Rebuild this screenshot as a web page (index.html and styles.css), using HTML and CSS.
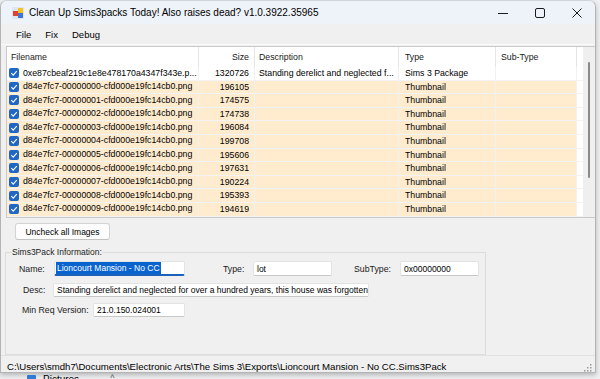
FILE: index.html
```html
<!DOCTYPE html>
<html lang="en">
<head>
    <meta charset="UTF-8">
    <title>Clean Up Sims3packs Today!</title>
    <link rel="stylesheet" href="styles.css">
</head>
<body>
    <div class="window">
        <div class="titlebar">
            <svg class="app-icon" width="12" height="12" viewBox="0 0 12 12">
                <rect x="0" y="0" width="12" height="12" rx="1" fill="#dde7f2"/>
                <rect x="6" y="1" width="5" height="5" fill="#f4c21b"/>
                <rect x="1" y="4" width="5" height="5" fill="#e2412f"/>
                <rect x="6" y="6" width="5" height="5" fill="#3b78d4"/>
            </svg>
            <span class="title">Clean Up Sims3packs Today! Also raises dead? v1.0.3922.35965</span>
            <div class="caption-buttons">
                <span class="caption-btn">
                    <svg width="10" height="10" viewBox="0 0 10 10"><path d="M0 5.5h10" stroke="#1b1b1b" stroke-width="1"/></svg>
                </span>
                <span class="caption-btn">
                    <svg width="10" height="10" viewBox="0 0 10 10"><rect x="0.5" y="0.5" width="9" height="9" rx="1.5" fill="none" stroke="#1b1b1b" stroke-width="1"/></svg>
                </span>
                <span class="caption-btn">
                    <svg width="10" height="10" viewBox="0 0 10 10"><path d="M0.5 0.5l9 9M9.5 0.5l-9 9" stroke="#1b1b1b" stroke-width="1"/></svg>
                </span>
            </div>
        </div>

        <div class="menubar">
            <span class="menu-item">File</span>
            <span class="menu-item">Fix</span>
            <span class="menu-item">Debug</span>
        </div>

        <div class="listview">
            <div class="list-main">
                <div class="lv-row lv-header">
                    <div class="cell">Filename</div>
                    <div class="cell num">Size</div>
                    <div class="cell">Description</div>
                    <div class="cell type">Type</div>
                    <div class="cell sub">Sub-Type</div>
                    <div class="cell filler"></div>
                </div>
                <div class="lv-row">
                    <div class="cell name"><span class="check"></span>0xe87cbeaf219c1e8e478170a4347f343e.p...</div>
                    <div class="cell num">1320726</div>
                    <div class="cell">Standing derelict and neglected f...</div>
                    <div class="cell type">Sims 3 Package</div>
                    <div class="cell sub"></div>
                    <div class="cell filler"></div>
                </div>
                <div class="lv-row thumb-row">
                    <div class="cell name"><span class="check"></span>d84e7fc7-00000000-cfd000e19fc14cb0.png</div>
                    <div class="cell num">196105</div>
                    <div class="cell"></div>
                    <div class="cell type">Thumbnail</div>
                    <div class="cell sub"></div>
                    <div class="cell filler"></div>
                </div>
                <div class="lv-row thumb-row">
                    <div class="cell name"><span class="check"></span>d84e7fc7-00000001-cfd000e19fc14cb0.png</div>
                    <div class="cell num">174575</div>
                    <div class="cell"></div>
                    <div class="cell type">Thumbnail</div>
                    <div class="cell sub"></div>
                    <div class="cell filler"></div>
                </div>
                <div class="lv-row thumb-row">
                    <div class="cell name"><span class="check"></span>d84e7fc7-00000002-cfd000e19fc14cb0.png</div>
                    <div class="cell num">174738</div>
                    <div class="cell"></div>
                    <div class="cell type">Thumbnail</div>
                    <div class="cell sub"></div>
                    <div class="cell filler"></div>
                </div>
                <div class="lv-row thumb-row">
                    <div class="cell name"><span class="check"></span>d84e7fc7-00000003-cfd000e19fc14cb0.png</div>
                    <div class="cell num">196084</div>
                    <div class="cell"></div>
                    <div class="cell type">Thumbnail</div>
                    <div class="cell sub"></div>
                    <div class="cell filler"></div>
                </div>
                <div class="lv-row thumb-row">
                    <div class="cell name"><span class="check"></span>d84e7fc7-00000004-cfd000e19fc14cb0.png</div>
                    <div class="cell num">199708</div>
                    <div class="cell"></div>
                    <div class="cell type">Thumbnail</div>
                    <div class="cell sub"></div>
                    <div class="cell filler"></div>
                </div>
                <div class="lv-row thumb-row">
                    <div class="cell name"><span class="check"></span>d84e7fc7-00000005-cfd000e19fc14cb0.png</div>
                    <div class="cell num">195606</div>
                    <div class="cell"></div>
                    <div class="cell type">Thumbnail</div>
                    <div class="cell sub"></div>
                    <div class="cell filler"></div>
                </div>
                <div class="lv-row thumb-row">
                    <div class="cell name"><span class="check"></span>d84e7fc7-00000006-cfd000e19fc14cb0.png</div>
                    <div class="cell num">197631</div>
                    <div class="cell"></div>
                    <div class="cell type">Thumbnail</div>
                    <div class="cell sub"></div>
                    <div class="cell filler"></div>
                </div>
                <div class="lv-row thumb-row">
                    <div class="cell name"><span class="check"></span>d84e7fc7-00000007-cfd000e19fc14cb0.png</div>
                    <div class="cell num">190224</div>
                    <div class="cell"></div>
                    <div class="cell type">Thumbnail</div>
                    <div class="cell sub"></div>
                    <div class="cell filler"></div>
                </div>
                <div class="lv-row thumb-row">
                    <div class="cell name"><span class="check"></span>d84e7fc7-00000008-cfd000e19fc14cb0.png</div>
                    <div class="cell num">195393</div>
                    <div class="cell"></div>
                    <div class="cell type">Thumbnail</div>
                    <div class="cell sub"></div>
                    <div class="cell filler"></div>
                </div>
                <div class="lv-row thumb-row">
                    <div class="cell name"><span class="check"></span>d84e7fc7-00000009-cfd000e19fc14cb0.png</div>
                    <div class="cell num">194619</div>
                    <div class="cell"></div>
                    <div class="cell type">Thumbnail</div>
                    <div class="cell sub"></div>
                    <div class="cell filler"></div>
                </div>
            </div>
            <div class="vscroll"><div class="scroll-thumb"></div></div>
        </div>

        <div class="actions">
            <button class="btn">Uncheck all Images</button>
        </div>

        <fieldset class="info">
            <legend>Sims3Pack Information:</legend>
            <div class="info-row row-name">
                <label class="lbl lbl-name">Name:</label>
                <span class="textbox tb-name focused"><span class="selected">Lioncourt Mansion - No CC</span></span>
                <label class="lbl lbl-type">Type:</label>
                <span class="textbox tb-type">lot</span>
                <label class="lbl lbl-sub">SubType:</label>
                <span class="textbox tb-sub">0x00000000</span>
            </div>
            <div class="info-row row-desc">
                <label class="lbl lbl-desc">Desc:</label>
                <span class="textbox tb-desc">Standing derelict and neglected for over a hundred years, this house was forgotten</span>
            </div>
            <div class="info-row row-ver">
                <label class="lbl lbl-ver">Min Req Version:</label>
                <span class="textbox tb-ver">21.0.150.024001</span>
            </div>
        </fieldset>

        <div class="statusbar">
            <span class="path">C:\Users\smdh7\Documents\Electronic Arts\The Sims 3\Exports\Lioncourt Mansion - No CC.Sims3Pack</span>
            <svg class="grip" width="8" height="8" viewBox="0 0 8 8">
                <rect x="6" y="0" width="1.5" height="1.5" fill="#9a9a9a"/>
                <rect x="3" y="3" width="1.5" height="1.5" fill="#9a9a9a"/>
                <rect x="6" y="3" width="1.5" height="1.5" fill="#9a9a9a"/>
                <rect x="0" y="6" width="1.5" height="1.5" fill="#9a9a9a"/>
                <rect x="3" y="6" width="1.5" height="1.5" fill="#9a9a9a"/>
                <rect x="6" y="6" width="1.5" height="1.5" fill="#9a9a9a"/>
            </svg>
        </div>
    </div>

    <div class="desktop-peek">
        <span class="folder-icon"></span>
        <span class="peek-text">Pictures</span>
        <span class="pin">^</span>
    </div>
</body>
</html>
```

FILE: styles.css
```css
body {
    margin: 0;
    width: 600px;
    height: 379px;
    overflow: hidden;
    background: #eef0f2;
    font-family: "Liberation Sans", Arial, sans-serif;
    font-size: 8.75px;
    color: #000;
}

.window {
    width: 596px;
    height: 373px;
    box-sizing: border-box;
    border: 1px solid #b4b4b4;
    border-top-color: #cfd4d9;
    border-radius: 7px 7px 0 0;
    background: #f0f0f0;
    display: flex;
    flex-direction: column;
    overflow: hidden;
    box-shadow: 0 2px 5px rgba(0, 0, 0, 0.25);
}

/* title bar */

.titlebar {
    height: 23px;
    flex: none;
    display: flex;
    align-items: center;
    background: #eef3f9;
    padding-left: 11px;
}

.app-icon {
    margin-right: 5px;
    flex: none;
}

.title {
    font-size: 10px;
    white-space: nowrap;
}

.caption-buttons {
    margin-left: auto;
    display: flex;
    height: 100%;
}

.caption-btn {
    width: 37px;
    display: flex;
    align-items: center;
    justify-content: center;
}

/* menu */

.menubar {
    height: 21px;
    flex: none;
    display: flex;
    align-items: center;
    padding-left: 8px;
    background: #f0f0f0;
    border-bottom: 1px solid #fbfbfb;
    box-sizing: border-box;
}

.menu-item {
    padding: 0 7px;
    font-size: 9.5px;
}

/* list view */

.listview {
    flex: none;
    height: 172px;
    box-sizing: border-box;
    margin: 1px 0 0 5px;
    border: 1px solid #c9c9c9;
    border-right: none;
    background: #fff;
    display: flex;
    overflow: hidden;
}

.list-main {
    flex: 1;
}

.lv-row {
    display: grid;
    grid-template-columns: 192px 56px 144px 97px 81px 1fr;
    height: 13.6px;
    line-height: 13.6px;
}

.lv-row .cell {
    box-sizing: border-box;
    border-right: 1px solid #f1f1f1;
    border-bottom: 1px solid #f3f3f3;
    padding-left: 4px;
    white-space: nowrap;
    overflow: hidden;
}

.lv-row .cell.num {
    text-align: right;
    padding-left: 0;
    padding-right: 5px;
}

.lv-row .cell.type {
    padding-left: 6px;
}

.lv-row .cell.sub {
    padding-left: 5px;
}

.lv-row .cell.filler {
    border-right: none;
    background: #fff;
}

.lv-header {
    height: 20px;
    line-height: 20px;
}

.lv-header .cell {
    border-right: 1px solid #e5e5e5;
    border-bottom: none;
    color: #1a1a1a;
}

.thumb-row .cell {
    background: #ffebcd;
}

.cell.name {
    display: flex;
    align-items: center;
    padding-left: 2px;
}

.check {
    width: 10px;
    height: 10px;
    flex: none;
    margin-right: 4px;
    border-radius: 2px;
    background: #1f67c5 url("data:image/svg+xml,%3Csvg xmlns='http://www.w3.org/2000/svg' width='10' height='10'%3E%3Cpath d='M2.3 5.2l1.9 1.9 3.6-3.9' fill='none' stroke='white' stroke-width='1.1'/%3E%3C/svg%3E") no-repeat center;
}

.vscroll {
    width: 12px;
    flex: none;
    background: #efefef;
    position: relative;
}

.scroll-thumb {
    position: absolute;
    left: 5px;
    top: 15px;
    width: 2px;
    height: 116px;
    border-radius: 1px;
    background: #8a8a8a;
}

/* button */

.actions {
    padding: 5px 0 0 14px;
    flex: none;
}

.btn {
    display: block;
    width: 95px;
    height: 17px;
    padding: 0;
    border: 1px solid #d3d3d3;
    border-bottom-color: #c2c2c2;
    border-radius: 3px;
    background: #fdfdfd;
    font-family: inherit;
    font-size: 8.5px;
    color: #000;
}

/* group box */

.info {
    flex: none;
    margin: 6px 0 0 4px;
    width: 481px;
    height: 109px;
    box-sizing: border-box;
    border: 1px solid #dcdcdc;
    padding: 2px 0 0 0;
    font-size: 8.5px;
}

.info legend {
    padding: 0;
    margin-left: 6px;
    line-height: 13px;
    color: #1a1a1a;
}

.info-row {
    display: flex;
    align-items: center;
    height: 15px;
}

.row-desc {
    margin-top: 7px;
    height: 14px;
}

.row-ver {
    margin-top: 6px;
    height: 14px;
}

.lbl {
    white-space: nowrap;
    color: #1a1a1a;
    font-size: 8.75px;
}

.lbl-name { margin-left: 13px; width: 35px; }
.lbl-type { margin-left: 38px; width: 30px; }
.lbl-sub { margin-left: 22px; width: 46px; }
.lbl-desc { margin-left: 17px; width: 30px; }
.lbl-ver { margin-left: 16px; width: 71px; }

.textbox {
    box-sizing: border-box;
    height: 100%;
    display: flex;
    align-items: center;
    padding-left: 3px;
    background: #fff;
    border: 1px solid #e3e3e3;
    border-bottom-color: #c7c7c7;
    border-radius: 2px;
    white-space: nowrap;
    overflow: hidden;
}

.tb-name { width: 131px; }
.tb-type { width: 79px; }
.tb-sub { width: 79px; }
.tb-desc { width: 316px; }
.tb-ver { width: 92px; }

.textbox.focused {
    border-bottom: 2px solid #1c62b9;
    padding-left: 1px;
}

.selected {
    background: #0a64d0;
    color: #fff;
    padding: 0 1px;
    line-height: 12px;
}

/* status bar */

.statusbar {
    margin-top: auto;
    height: 18px;
    flex: none;
    box-sizing: border-box;
    border-top: 1px solid #e2e2e2;
    display: flex;
    align-items: center;
    padding: 3px 3px 0 6px;
    background: #f0f0f0;
}

.path {
    font-size: 9.6px;
    white-space: nowrap;
}

.grip {
    margin-left: auto;
    margin-top: 4px;
}

/* desktop below the window */

.desktop-peek {
    height: 6px;
    overflow: hidden;
    display: flex;
    align-items: flex-start;
    padding-left: 27px;
    gap: 7px;
}

.folder-icon {
    width: 9px;
    height: 8px;
    margin-top: 2px;
    background: #2f7ad6;
    border-radius: 1px;
}

.peek-text {
    font-size: 10px;
    line-height: 12px;
    margin-top: 1px;
}

.pin {
    margin-left: 24px;
    font-size: 9px;
    color: #555;
}
```
